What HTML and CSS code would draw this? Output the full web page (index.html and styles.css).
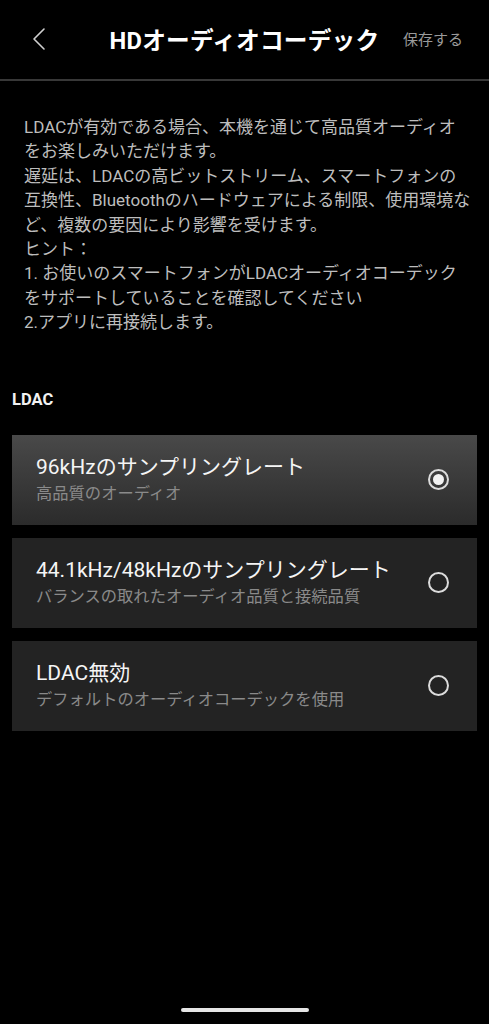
FILE: index.html
```html
<!DOCTYPE html>
<html lang="ja">
  <head>
    <meta charset="UTF-8" />
    <meta name="viewport" content="width=device-width, initial-scale=1.0" />
    <title>HDオーディオコーデック</title>
    <link rel="stylesheet" href="styles.css">
  </head>
  <body>
    <div class="screen">
      <header class="top-bar">
        <button class="button--back">
          <svg width="14" height="24" viewBox="0 0 14 24">
            <path d="M12 2 L2 12 L12 22" fill="none" stroke="#d0d0d0" stroke-width="1.6" stroke-linecap="round" stroke-linejoin="round" />
          </svg>
        </button>
        <h1 class="top-bar__title">HDオーディオコーデック</h1>
        <button class="button--save">保存する</button>
      </header>

      <div class="description">
        <p>LDACが有効である場合、本機を通じて高品質オーディオ<br>をお楽しみいただけます。</p>
        <p>遅延は、LDACの高ビットストリーム、スマートフォンの<br>互換性、Bluetoothのハードウェアによる制限、使用環境な<br>ど、複数の要因により影響を受けます。</p>
        <p>ヒント：</p>
        <p>1. お使いのスマートフォンがLDACオーディオコーデック<br>をサポートしていることを確認してください</p>
        <p>2.アプリに再接続します。</p>
      </div>

      <h2 class="section__label">LDAC</h2>

      <div class="options">
        <div class="option option--active">
          <div class="option__text">
            <div class="option__title">96kHzのサンプリングレート</div>
            <div class="option__sub">高品質のオーディオ</div>
          </div>
          <span class="radio radio--checked"></span>
        </div>
        <div class="option">
          <div class="option__text">
            <div class="option__title">44.1kHz/48kHzのサンプリングレート</div>
            <div class="option__sub">バランスの取れたオーディオ品質と接続品質</div>
          </div>
          <span class="radio"></span>
        </div>
        <div class="option">
          <div class="option__text">
            <div class="option__title">LDAC無効</div>
            <div class="option__sub">デフォルトのオーディオコーデックを使用</div>
          </div>
          <span class="radio"></span>
        </div>
      </div>

      <div class="home-indicator"></div>
    </div>
  </body>
</html>
```

FILE: styles.css
```css
* {
  box-sizing: border-box;
  margin: 0;
  padding: 0;
}
body,
html {
  width: 100%;
  height: 100%;
  background-color: #000;
}
body {
  font-family: "Roboto", "Noto Sans CJK JP", sans-serif;
  color: #fff;
}
.screen {
  display: flex;
  flex-direction: column;
  min-height: 1024px;
}
button {
  background-color: transparent;
  border: none;
  cursor: pointer;
  font-family: inherit;
}

.top-bar {
  height: 81px;
  display: flex;
  align-items: center;
  border-bottom: 2px solid #383838;
  padding-bottom: 2px;
}
.button--back {
  width: 78px;
  padding-left: 32px;
  display: flex;
  align-items: center;
}
.top-bar__title {
  flex: 1;
  text-align: center;
  font-size: 23.7px;
  font-weight: 700;
  letter-spacing: 0.2px;
  padding-left: 20px;
  white-space: nowrap;
}
.button--save {
  color: #9a9a9a;
  font-size: 15px;
  padding-right: 26px;
  padding-left: 12px;
}

.description {
  padding: 34px 8px 0 24px;
  font-size: 17px;
  line-height: 24.4px;
  color: #bdbdbd;
  white-space: nowrap;
}

.section__label {
  margin-top: 55px;
  padding-left: 12px;
  font-size: 16.5px;
  line-height: 20px;
  font-weight: 700;
  color: #f2f2f2;
}

.options {
  margin-top: 25px;
  padding: 0 12px;
  display: flex;
  flex-direction: column;
  gap: 13px;
}
.option {
  height: 90px;
  display: flex;
  align-items: center;
  justify-content: space-between;
  padding: 0 28px 0 24px;
  background-color: #232323;
}
.option--active {
  background: linear-gradient(#494949, #2b2b2b);
}
.option__title {
  font-size: 21px;
  line-height: 26px;
  color: #f5f5f5;
}
.option__sub {
  margin-top: 3px;
  font-size: 16.3px;
  line-height: 22px;
  color: #8a8a8a;
}
.radio {
  width: 21px;
  height: 21px;
  border-radius: 50%;
  border: 2px solid #dcdcdc;
  flex-shrink: 0;
  display: flex;
  align-items: center;
  justify-content: center;
}
.radio--checked::after {
  content: "";
  width: 11px;
  height: 11px;
  border-radius: 50%;
  background-color: #f2f2f2;
}

.home-indicator {
  margin: auto auto 12px auto;
  width: 128px;
  height: 4px;
  border-radius: 2px;
  background-color: #e6e6e6;
}
```
